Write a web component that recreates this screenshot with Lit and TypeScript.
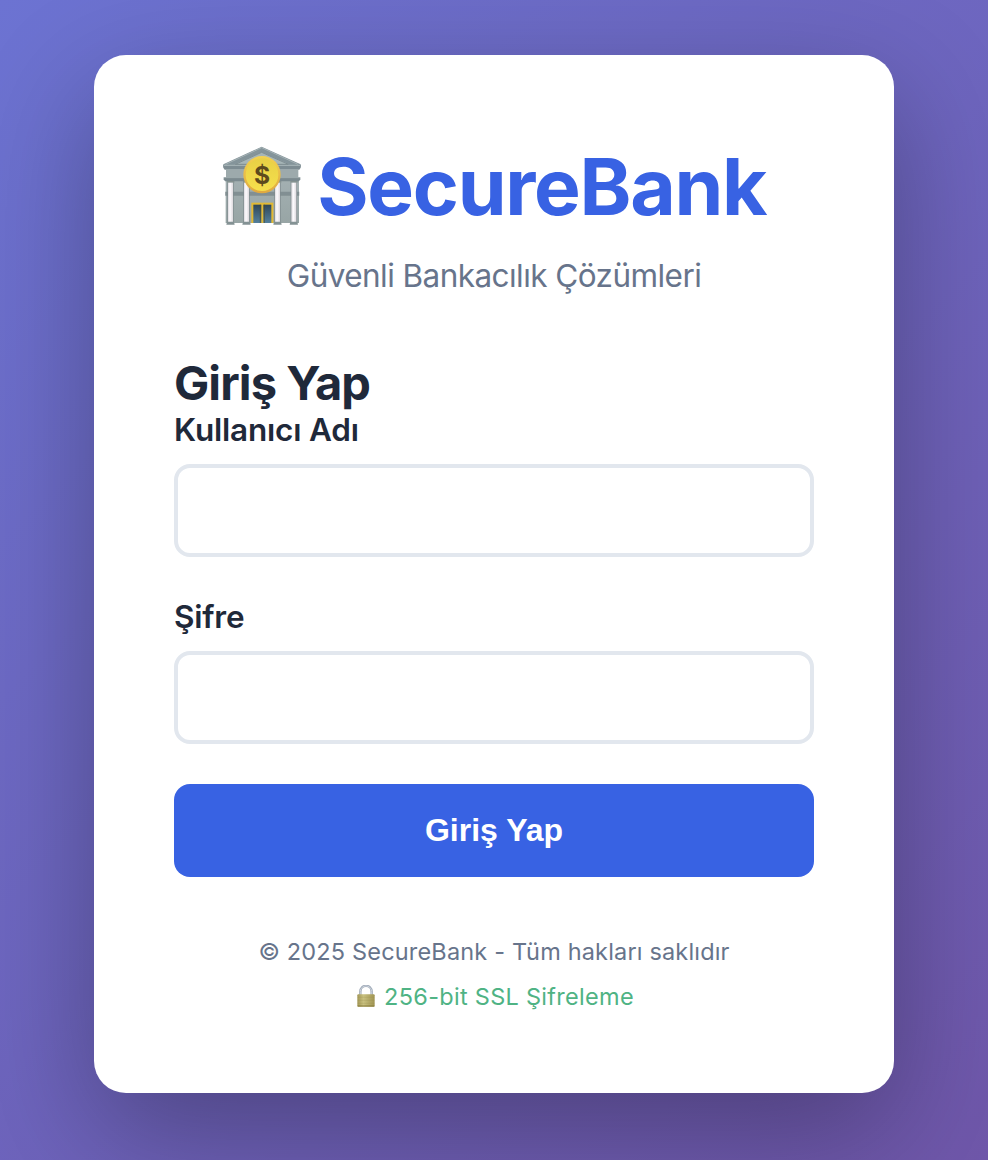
import { LitElement, html, css, svg } from "lit";
import { customElement } from "lit/decorators.js";

const bankIcon = html`
  <svg class="bank" viewBox="36 30 240 240" aria-hidden="true">
    <defs>
      <linearGradient id="wall" x1="0" y1="0" x2="0" y2="1">
        <stop offset="0" stop-color="#a3b0b2" />
        <stop offset="1" stop-color="#98a5a5" />
      </linearGradient>
      <linearGradient id="column" x1="0" y1="0" x2="1" y2="0">
        <stop offset="0" stop-color="#dcdade" />
        <stop offset="0.4" stop-color="#fdfbfe" />
        <stop offset="1" stop-color="#dedade" />
      </linearGradient>
      <linearGradient id="rim" x1="0" y1="0" x2="0" y2="1">
        <stop offset="0" stop-color="#f3d250" />
        <stop offset="1" stop-color="#dfa840" />
      </linearGradient>
      <linearGradient id="coin" x1="0" y1="0" x2="0" y2="1">
        <stop offset="0" stop-color="#e8d045" />
        <stop offset="1" stop-color="#f6e04c" />
      </linearGradient>
      <linearGradient id="glass" x1="0" y1="0" x2="0" y2="1">
        <stop offset="0" stop-color="#2f4658" />
        <stop offset="1" stop-color="#54809c" />
      </linearGradient>
    </defs>
    <rect x="47" y="130" width="220" height="134" fill="url(#wall)" />
    <path d="M45 170H268V182H45Z" fill="#6e7c80" opacity="0.6" />
    <path d="M155 35L272 88V97H40V88Z" fill="#84949a" />
    <path d="M155 51L238 88H73Z" fill="#a6b5b7" />
    <path d="M155 38L264 88M155 38L47 88" stroke="#a5b2b5" stroke-width="3" fill="none" />
    <path d="M155 52L235 88H76Z" stroke="#6c7b82" stroke-width="2" fill="none" />
    <path d="M40 90H272V98L268 104H44L40 98Z" fill="#7d8c92" />
    <path d="M42 91H270" stroke="#aab7ba" stroke-width="3" />
    <rect x="48" y="104" width="217" height="24" fill="#9daaac" />
    <path d="M41 127H271V133L267 139H45L41 133Z" fill="#7b8a8f" />
    <path d="M42 128H270" stroke="#abb8ba" stroke-width="2" />
    ${[54, 102, 195, 244].map(
      (x) => svg`
        <rect x=${x - 3} y="138" width="22" height="5" fill="#84918f" />
        <rect x=${x - 2} y="143" width="19" height="118" fill="#7f8b8e" />
        <rect x=${x} y="143" width="15" height="118" fill="url(#column)" />
        <path d=${`M${x - 3} 260H${x + 18}L${x + 20} 269H${x - 5}Z`} fill="#849294" />
      `
    )}
    <rect x="124" y="203" width="66" height="61" fill="#e2b934" />
    <rect x="130" y="209" width="24" height="55" fill="url(#glass)" />
    <rect x="160" y="209" width="24" height="55" fill="url(#glass)" />
    <path d="M151 209V264M163 209V264" stroke="#4b4a2f" stroke-width="2" />
    <circle cx="156" cy="119" r="56" fill="url(#rim)" />
    <circle cx="156" cy="119" r="49" fill="url(#coin)" />
    <text class="dollar" x="156" y="147" text-anchor="middle">$</text>
  </svg>
`;

const lockIcon = html`
  <svg class="lock" viewBox="0 0 54 66" aria-hidden="true">
    <defs>
      <linearGradient id="brass" x1="0" y1="0" x2="1" y2="0">
        <stop offset="0" stop-color="#a39756" />
        <stop offset="0.35" stop-color="#c9c180" />
        <stop offset="1" stop-color="#a09452" />
      </linearGradient>
    </defs>
    <path d="M10 32V20C10 -3 44 -3 44 20V32" fill="none" stroke="#98a3b2" stroke-width="7" />
    <path d="M10 32V20C10 -3 44 -3 44 20V32" fill="none" stroke="#ced5de" stroke-width="3" />
    <rect x="1" y="28" width="52" height="37" rx="3" fill="url(#brass)" />
    <path d="M2 37H52M2 46H52M2 55H52" stroke="#918545" stroke-width="2" opacity="0.3" />
    <path d="M2 63H52" stroke="#857839" stroke-width="3" />
  </svg>
`;

@customElement("app-root")
export class AppRoot extends LitElement {
  static styles = css`
    :host {
      display: flex;
      justify-content: center;
      align-items: flex-start;
      box-sizing: border-box;
      height: 1160px;
      padding-top: 55px;
      overflow: hidden;
      background: linear-gradient(135deg, #6c73d2 0%, #6f57aa 100%);
      font-family: Inter, "Liberation Sans", sans-serif;
      color: #1f293a;
      white-space: nowrap;
    }
    .card {
      box-sizing: border-box;
      width: 800px;
      height: 1038px;
      padding: 80px;
      border-radius: 32px;
      background: #fff;
      box-shadow: 0 40px 120px rgba(0, 0, 0, 0.3);
    }
    .brand {
      display: flex;
      justify-content: center;
      align-items: center;
      gap: 15.5px;
      height: 103px;
      margin: 0;
      color: #3862e3;
      font-size: 78.5px;
      font-weight: 700;
      line-height: 103px;
      letter-spacing: -1.3px;
    }
    .bank {
      width: 80px;
      height: 80px;
      margin-bottom: 3px;
      flex: none;
    }
    .dollar {
      font: 700 74px Inter, sans-serif;
      letter-spacing: 0;
      fill: #5d4a1d;
    }
    .tagline {
      margin: 18px 0 0;
      color: #67748b;
      font-size: 31.5px;
      line-height: 39px;
      text-align: center;
      letter-spacing: -0.56px;
    }
    .heading {
      margin: 60px 0 0;
      font-size: 47px;
      font-weight: 700;
      line-height: 56px;
      letter-spacing: -0.9px;
    }
    .label {
      display: block;
      font-size: 31.5px;
      font-weight: 600;
      line-height: 37px;
      letter-spacing: -0.2px;
    }
    .input {
      display: block;
      box-sizing: border-box;
      width: 100%;
      height: 93px;
      margin: 16px 0 41px;
      padding: 0 28px;
      border: 4px solid #e2e7ee;
      border-radius: 16px;
      background: #fff;
      font: 32px Inter, sans-serif;
      outline: none;
    }
    .input.last {
      margin-bottom: 40px;
    }
    .submit {
      display: block;
      width: 100%;
      height: 93px;
      padding: 0;
      border: 0;
      border-radius: 16px;
      background: #3862e3;
      color: #fff;
      font: 700 32px "Liberation Sans", Arial, sans-serif;
    }
    .footer {
      margin-top: 60px;
      color: #67748b;
      font-size: 23.5px;
      line-height: 29px;
      text-align: center;
    }
    .copy {
      margin: 0;
      letter-spacing: 0.17px;
    }
    .secure {
      display: flex;
      justify-content: center;
      align-items: center;
      gap: 9px;
      margin: 16px 0 0;
      padding-left: 3px;
      color: #4fb384;
      letter-spacing: 0.29px;
    }
    .lock {
      width: 18px;
      height: 22px;
      margin-bottom: 1px;
      flex: none;
    }
  `;

  render() {
    return html`
      <main class="card">
        <h1 class="brand">${bankIcon}<span>SecureBank</span></h1>
        <p class="tagline">Güvenli Bankacılık Çözümleri</p>
        <form @submit=${(e: Event) => e.preventDefault()}>
          <h2 class="heading">Giriş Yap</h2>
          <label class="label" for="user">Kullanıcı Adı</label>
          <input class="input" id="user" type="text" />
          <label class="label" for="pass">Şifre</label>
          <input class="input last" id="pass" type="password" />
          <button class="submit" type="submit">Giriş Yap</button>
        </form>
        <footer class="footer">
          <p class="copy">© 2025 SecureBank - Tüm hakları saklıdır</p>
          <p class="secure">${lockIcon}<span>256-bit SSL Şifreleme</span></p>
        </footer>
      </main>
    `;
  }
}
